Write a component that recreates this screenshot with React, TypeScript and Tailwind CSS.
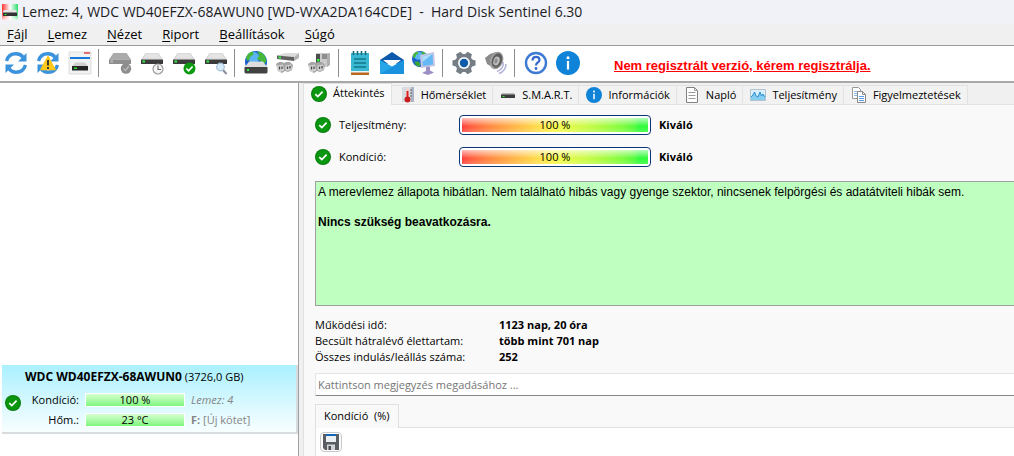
import { useState } from "react";
import type { ReactNode } from "react";

const MENU = ["Fájl", "Lemez", "Nézet", "Riport", "Beállítások", "Súgó"];

const STATS = [
  { label: "Működési idő:", value: "1123 nap, 20 óra" },
  { label: "Becsült hátralévő élettartam:", value: "több mint 701 nap" },
  { label: "Összes indulás/leállás száma:", value: "252" },
];

const TABS: { label: string; icon: ReactNode }[] = [
  { label: "Áttekintés", icon: <OkIcon /> },
  { label: "Hőmérséklet", icon: <ThermoIcon /> },
  { label: "S.M.A.R.T.", icon: <SmartIcon /> },
  { label: "Információk", icon: <InfoIcon className="w-4 h-4" /> },
  { label: "Napló", icon: <PageIcon /> },
  { label: "Teljesítmény", icon: <ChartIcon /> },
  { label: "Figyelmeztetések", icon: <PagesIcon /> },
];

const TOOLS: { label: string; icon: ReactNode }[][] = [
  [
    { label: "Frissítés", icon: <RefreshIcon /> },
    { label: "Hibák frissítése", icon: <RefreshIcon warn /> },
    { label: "Lemezablak", icon: <WindowIcon /> },
  ],
  [
    { label: "Teszt", icon: <DriveTool dim><circle cx="18" cy="17.5" r="5.2" fill="#8c8c8c" /><path d="M15.5 17.5l2 2 3.5-4.5" stroke="#b5b5b5" strokeWidth="1.6" fill="none" /></DriveTool> },
    { label: "Rövid teszt", icon: <DriveTool><circle cx="18" cy="18" r="5" fill="#f4f4f4" stroke="#9a9a9a" strokeWidth="1.2" /><path d="M18 14.5v4h3" stroke="#666" strokeWidth="1.1" fill="none" /></DriveTool> },
    { label: "Hosszú teszt", icon: <DriveTool><circle cx="17.5" cy="17.5" r="6" fill="#0a9a0f" /><path d="M14.3 17.5l2.3 2.3 4-4.3" stroke="#fff" strokeWidth="1.7" fill="none" /></DriveTool> },
    { label: "Felülettesztelés", icon: <DriveTool><path d="M19 19l3.5 4" stroke="#8a8d98" strokeWidth="2" /><circle cx="16.5" cy="16" r="3.8" fill="#d7ecfb" stroke="#a2bdd4" strokeWidth="1.2" /></DriveTool> },
  ],
  [
    { label: "Hálózati lemezek", icon: <GlobeDriveIcon /> },
    { label: "Eltávolítás", icon: <PlugIcon /> },
    { label: "Csatlakoztatás", icon: <PlugIcon upright /> },
  ],
  [
    { label: "Jelentés", icon: <NotepadIcon /> },
    { label: "Levél küldése", icon: <MailIcon /> },
    { label: "Hálózat", icon: <NetworkIcon /> },
  ],
  [
    { label: "Beállítások", icon: <GearIcon /> },
    { label: "Hangok", icon: <SpeakerIcon /> },
  ],
  [
    { label: "Súgó", icon: <HelpIcon /> },
    { label: "Névjegy", icon: <InfoIcon className="w-6 h-6" /> },
  ],
];

export default function App() {
  const [tab, setTab] = useState("Áttekintés");
  const [note, setNote] = useState("");

  return (
    <div className="min-h-screen flex flex-col overflow-hidden bg-[#f0f0f0] text-black text-[11px] font-['Open_Sans','Noto_Sans',sans-serif]">
      <header className="h-6 flex items-center gap-1 px-0.5 bg-[#f0f2f8]">
        <AppIcon />
        <h1 className="text-sm leading-6 whitespace-pre text-[#1c1c1c]">Lemez: 4, WDC WD40EFZX-68AWUN0 [WD-WXA2DA164CDE]  -  Hard Disk Sentinel 6.30</h1>
      </header>

      <nav className="h-[22px] flex items-start gap-5 pl-[7px] text-[13px] leading-5 border-b border-[#9a9a9a]">
        {MENU.map((m) => (
          <button key={m} type="button"><span className="underline underline-offset-2">{m[0]}</span>{m.slice(1)}</button>
        ))}
      </nav>

      <div className="h-[37px] flex items-start bg-white border-b-2 border-[#a8a8a8]">
        {TOOLS.map((group, i) => (
          <div key={i} className="flex items-center pt-px">
            {i > 0 && <span className="w-px h-7 ml-0.5 mr-[5px] bg-[#8c8c8c]" />}
            {group.map((t) => (
              <button key={t.label} type="button" aria-label={t.label} className="w-8 h-8 flex items-center justify-center">{t.icon}</button>
            ))}
          </div>
        ))}
        <a href="#register" className="ml-[30px] text-[13px] leading-10 font-bold text-[#ff0000] underline whitespace-nowrap font-['Liberation_Sans',Arial,sans-serif]">Nem regisztrált verzió, kérem regisztrálja.</a>
      </div>

      <div className="flex-1 flex">
        <aside className="w-[299px] shrink-0 flex flex-col justify-end pb-[22px] bg-white border-r border-[#a0a0a0]">
          <DiskCard />
        </aside>

        <main className="flex-1 min-w-0 ml-1 flex flex-col bg-[#f9f9f9] border-l border-[#e0e0e0]">
          <div role="tablist" className="h-[22px] flex items-end bg-[#f0f0f0]">
            {TABS.map((t) => (
              <button key={t.label} type="button" role="tab" aria-selected={tab === t.label} onClick={() => setTab(t.label)}
                className={`shrink-0 flex items-center gap-1.5 pl-[7px] pr-1.5 border-r border-t border-[#e2e2e2] whitespace-nowrap ${
                  tab === t.label ? "h-[22px] pb-0.5 bg-[#f9f9f9]" : "h-5 border-b bg-[#f2f2f2]"}`}>
                {t.icon}{t.label}
              </button>
            ))}
            <span className="flex-1 border-b border-[#e4e4e4]" />
          </div>

          <div className="flex-1 flex flex-col pl-[11px] pt-1">
            <Gauge label="Teljesítmény:" value={100} rating="Kiváló" />
            <Gauge label="Kondíció:" value={100} rating="Kiváló" />

            <div className="h-[125px] mt-2 px-0.5 pt-[3px] bg-[#bfffbf] border border-r-0 border-[#9f9f9f] text-xs leading-[15px] font-['Liberation_Sans',Arial,sans-serif]">
              <p className="mb-[15px]">A merevlemez állapota hibátlan. Nem található hibás vagy gyenge szektor, nincsenek felpörgési és adatátviteli hibák sem.</p>
              <p className="font-bold">Nincs szükség beavatkozásra.</p>
            </div>

            <dl className="mt-[11px] grid grid-cols-[184px_1fr] leading-4">
              {STATS.map((s) => (
                <div key={s.label} className="contents">
                  <dt>{s.label}</dt>
                  <dd className="font-bold">{s.value}</dd>
                </div>
              ))}
            </dl>

            <input type="text" aria-label="Megjegyzés" value={note} onChange={(e) => setNote(e.target.value)} placeholder="Kattintson megjegyzés megadásához ..."
              className="h-[23px] mt-2 px-0.5 bg-white border border-r-0 border-[#e5e5e5] border-b-[#868686] placeholder-[#767676] outline-none" />

            <div className="flex items-end mt-2">
              <button type="button" className="h-6 px-2 bg-[#f9f9f9] border border-b-0 border-[#e0e0e0] whitespace-pre">Kondíció  (%)</button>
              <span className="flex-1 border-b border-[#e0e0e0]" />
            </div>
            <div className="flex-1 pt-1 pl-1 bg-white border-l border-[#e0e0e0]">
              <button type="button" aria-label="Mentés" className="w-[22px] h-5 flex items-center justify-center bg-[#fdfdfd] border border-[#c8c8c8] rounded-sm">
                <SaveIcon />
              </button>
            </div>
          </div>
        </main>
      </div>
    </div>
  );
}

function DiskCard() {
  return (
    <div className="h-[69px] ml-0.5 pl-[3px] flex items-stretch gap-1 bg-linear-to-b from-[#a9f0ff] to-[#f8feff] border-r-2 border-b-2 border-[#d8dcde]">
      <div className="pt-[30px]"><OkIcon /></div>
      <div className="flex-1 whitespace-nowrap">
        <p className="pt-0.5 pb-[3px] leading-5"><b className="text-xs leading-5">WDC WD40EFZX-68AWUN0</b> (3726,0 GB)</p>
        <DiskRow label="Kondíció:" value="100 %"><i>Lemez: 4</i></DiskRow>
        <DiskRow label="Hőm.:" value="23 °C"><b>F:</b> [Új kötet]</DiskRow>
      </div>
    </div>
  );
}

function DiskRow({ label, value, children }: { label: string; value: string; children: ReactNode }) {
  return (
    <div className="h-5 flex items-center">
      <span className="w-[54px] text-right">{label}</span>
      <span className="w-[100px] h-3.5 ml-1.5 flex items-center justify-center bg-linear-to-b from-[#d6ffd0] to-[#7cf67c] border border-white">{value}</span>
      <span className="ml-1.5 text-[#858585]">{children}</span>
    </div>
  );
}

function Gauge({ label, value, rating }: { label: string; value: number; rating: string }) {
  return (
    <div className="h-8 flex items-center">
      <OkIcon />
      <span className="w-[120px] ml-2">{label}</span>
      <div className="relative w-48 h-5 p-0.5 bg-white border border-[#0b3475] rounded-[4px]">
        <div className="h-full bg-linear-to-r from-[#ff2424] via-[#f8f838] via-50% to-[#18fa22] to-95%" style={{ width: `${value}%` }}>
          <div className="h-full bg-linear-to-b from-white/70 via-white/10 via-60% to-white/25" />
        </div>
        <span className="absolute inset-0 flex items-center justify-center">{value} %</span>
      </div>
      <b className="ml-2">{rating}</b>
    </div>
  );
}

function OkIcon() {
  return (
    <svg className="w-4 h-4 shrink-0" viewBox="0 0 16 16">
      <circle cx="8" cy="8" r="8" fill="#087c0c" />
      <circle cx="8" cy="8" r="7" fill="#0a960f" />
      <path d="M4.3 8.2l2.5 2.4 4.8-4.9" fill="none" stroke="#fff" strokeWidth="1.7" />
    </svg>
  );
}

function InfoIcon({ className }: { className: string }) {
  return (
    <svg className={`${className} shrink-0`} viewBox="0 0 24 24">
      <circle cx="12" cy="12" r="12" fill="#0f83d8" />
      <circle cx="12" cy="6.8" r="1.5" fill="#fff" />
      <path d="M12 10v8.5" stroke="#fff" strokeWidth="2.2" />
    </svg>
  );
}

function AppIcon() {
  return (
    <svg className="w-4 h-4 shrink-0" viewBox="0 0 16 16">
      <defs>
        <linearGradient id="app" x1="0" y1="0" x2="1" y2="0">
          <stop offset="0" stopColor="#f33" /><stop offset=".5" stopColor="#fff" /><stop offset="1" stopColor="#2fdc6c" />
        </linearGradient>
        <linearGradient id="fade" x1="0" y1="0" x2="0" y2="1">
          <stop offset=".6" stopColor="#fff" stopOpacity="0" /><stop offset="1" stopColor="#fff" stopOpacity=".8" />
        </linearGradient>
      </defs>
      <path d="M0 0h16v16H0z" fill="url(#app)" />
      <path d="M0 0h16v16H0z" fill="url(#fade)" />
      <path d="M2 6h12l1.5 3H.5z" fill="#e4e4e4" />
      <path d="M1 8.5h14V12H1z" fill="#333" />
      <path d="M2.5 10h2v1h-2z" fill="#3f3" />
    </svg>
  );
}

function DriveBody({ dim }: { dim?: boolean }) {
  return (
    <g>
      <path d="M5.5 2h13L23 8.5H1z" fill={dim ? "#a6a6a6" : "#d5d5d5"} />
      <path d="M6.5 2.5h11l3.5 5H3z" fill={dim ? "#ababab" : "#e4e4e4"} />
      <path d="M1 8.5h22V13H1z" fill={dim ? "#8e8e8e" : "#3b3b3b"} />
      <path d="M2.5 9.5H5v2H2.5z" fill={dim ? "#bbb" : "#30f040"} />
    </g>
  );
}

function DriveTool({ dim, children }: { dim?: boolean; children: ReactNode }) {
  return <svg className="w-6 h-6" viewBox="0 0 24 24"><DriveBody dim={dim} />{children}</svg>;
}

function RefreshIcon({ warn }: { warn?: boolean }) {
  return (
    <svg className="w-6 h-6" viewBox="0 0 24 24">
      <path d="M2.5 10C4 4.5 8 2.8 12 2.8c3 0 5.5 1.2 7 3.4" fill="none" stroke="#3c93dc" strokeWidth="3.4" />
      <path d="M22.5 2v8.5H14z" fill="#3c93dc" />
      <path d="M21.5 14c-1.5 5.5-5.5 7.2-9.5 7.2-3 0-5.5-1.2-7-3.4" fill="none" stroke="#3c93dc" strokeWidth="3.4" />
      <path d="M1.5 22v-8.5H10z" fill="#3c93dc" />
      {warn && (
        <g>
          <path d="M12 5.5l7 13H5z" fill="#ffc91c" stroke="#ffc91c" strokeWidth="1.5" strokeLinejoin="round" />
          <path d="M12 9v5.5M12 16v2" stroke="#2b2b2b" strokeWidth="1.8" />
        </g>
      )}
    </svg>
  );
}

function WindowIcon() {
  return (
    <svg className="w-6 h-6" viewBox="0 0 24 24">
      <path d="M1 1h22v22H1z" fill="#f0f2f3" stroke="#ddd" />
      <path d="M16 2h6" stroke="#d44" strokeWidth="1.5" />
      <path d="M2 7h20" stroke="#1979d8" strokeWidth="2" />
      <path d="M7 11.5h10l3 4H4z" fill="#d1d1d1" />
      <path d="M4 15h16v4.5H4z" fill="#252525" />
      <path d="M6 16.5h3V18H6z" fill="#2be23b" />
    </svg>
  );
}

function Globe({ cx, cy, r }: { cx: number; cy: number; r: number }) {
  return (
    <g transform={`translate(${cx} ${cy}) scale(${r / 10})`}>
      <circle r="10" fill="#1a5fd0" />
      <circle cx="-2" cy="-4" r="5" fill="#5cb4f2" />
      <path d="M-9-4c1-3 3-5 6-5.5l1 2.5-3 2-1 3-2 1zM1-9.500c5 0 8 4 8.500 8.500L7 3 4-1 1-3l2-3z" fill="#45b83c" />
      <path d="M-7 3l5 0 3 3-2 4-4-2z" fill="#3aa636" />
    </g>
  );
}

function GlobeDriveIcon() {
  return (
    <svg className="w-6 h-6" viewBox="0 0 24 24">
      <Globe cx={12} cy={11} r={11} />
      <path d="M5 10.500h14l4.500 6H.5z" fill="#dedede" />
      <path d="M.5 16h23v5.500l-1 1h-21l-1-1z" fill="#424242" />
      <path d="M3 18h2v2H3z" fill="#30f040" />
    </svg>
  );
}

function PlugIcon({ upright }: { upright?: boolean }) {
  return (
    <svg className="w-6 h-6" viewBox="0 0 24 24">
      {upright ? (
        <g>
          <path d="M8 2h14v12l-4 2H8z" fill="#cbcbcb" />
          <path d="M19 3l3-1v12l-3 2z" fill="#b0b0b0" />
          <path d="M8 3h4v11H8z" fill="#4d4d4d" />
          <path d="M14 3h5v5h-5z" fill="#8e8e8e" />
          <path d="M9 8h2.500v2.500H9z" fill="#30f040" />
        </g>
      ) : (
        <g>
          <path d="M1 4.500L9 2h14l-5 4z" fill="#dcdcdc" />
          <path d="M1 4.500L18 6v4L1 8z" fill="#5f5f5f" />
          <path d="M18 6l5-4v5l-5 3z" fill="#b2b2b2" />
          <path d="M2.500 5.500H5v2H2.500z" fill="#30f040" />
        </g>
      )}
      <path d="M0 13l3-2h3l2 1 2-1h4l3 3-1 5-4 2-3-1-3 2-4-2z" fill="#a4a4a4" />
      <path d="M1 14.500l6-1 1 6-4 1.500-3-2zM9.500 14.500l5.500-1 1 4.500-4 2-2.500-1z" fill="#d2d2d2" />
      <path d="M3.500 15.500v3M6 15.500v2.500M11.500 15.500v2.500M14 15v2.500" stroke="#4b4b4b" strokeWidth="1.300" />
    </svg>
  );
}

function NotepadIcon() {
  return (
    <svg className="w-6 h-6" viewBox="0 0 24 24">
      <path d="M3 2h18v19H3z" fill="#39b8d2" />
      <path d="M3 21h18v3H3z" fill="#b86620" />
      <path d="M3 20h18v1.500H3z" fill="#eef4f4" />
      <path d="M5.500 0v4M9.500 0v4M13.500 0v4M17.500 0v4" stroke="#16667c" strokeWidth="1.600" />
      <path d="M6 8h12M6 12h12M6 16h12" stroke="#13758c" strokeWidth="1.500" />
    </svg>
  );
}

function MailIcon() {
  return (
    <svg className="w-6 h-6" viewBox="0 0 24 24">
      <path d="M0 9L12 1l12 8v4H0z" fill="#0d59ab" />
      <path d="M3 9h18l-9 7z" fill="#fff" />
      <path d="M0 9l12 6.500L24 9v14H0z" fill="#27a5e9" />
      <path d="M0 23l24-14v14z" fill="#1b92de" />
    </svg>
  );
}

function NetworkIcon() {
  return (
    <svg className="w-6 h-6" viewBox="0 0 24 24">
      <Globe cx={8} cy={8} r={8} />
      <path d="M8 4l14-3 1 14-14 2z" fill="#c4c4e4" />
      <path d="M10 5.500l10.500-2.500.5 10.500-10 1.500z" fill="#65b8f3" />
      <path d="M10 5.500l10.500-2.500-10 8z" fill="#aeddfb" />
      <path d="M14 16l4-.5v4l4 2-6 2.500-6-2 4-2z" fill="#9c8fc4" />
    </svg>
  );
}

function GearIcon() {
  return (
    <svg className="w-6 h-6" viewBox="0 0 24 24">
      <g fill="#757d85">
        <circle cx="12" cy="12" r="9" />
        {[30, 90, 150].map((a) => (
          <path key={a} d="M8.500 4l1-3.500h5l1 3.500v16l-1 3.500h-5l-1-3.500z" transform={`rotate(${a} 12 12)`} />
        ))}
      </g>
      <circle cx="12" cy="12" r="6" fill="#f6f8fa" />
      <circle cx="12" cy="12" r="4.200" fill="#0d5baa" />
    </svg>
  );
}

function SpeakerIcon() {
  return (
    <svg className="w-6 h-6" viewBox="0 0 24 24">
      <path d="M19 11c1 5-2 8-6 9.500M22 13c0 5-3 8-7 9.500" fill="none" stroke="#b4b4dc" strokeWidth="1.600" />
      <path d="M1 7l5-4 6-2 5 2-4 15-5-2-5-3z" fill="#8a8a8a" />
      <ellipse cx="12.500" cy="9.500" rx="6.500" ry="9" transform="rotate(20 12.500 9.500)" fill="#a0a0a0" />
      <ellipse cx="13" cy="9.500" rx="5" ry="7.500" transform="rotate(20 13 9.500)" fill="#5f5f5f" />
      <ellipse cx="12.500" cy="10" rx="3" ry="4.500" transform="rotate(20 12.500 10)" fill="#bcbcbc" />
      <ellipse cx="12" cy="10" rx="1.500" ry="2.500" transform="rotate(20 12 10)" fill="#8c8c8c" />
    </svg>
  );
}

function HelpIcon() {
  return (
    <svg className="w-6 h-6" viewBox="0 0 24 24">
      <circle cx="12" cy="12" r="10" fill="#fff" stroke="#3c7ad4" strokeWidth="2.400" />
      <path d="M8.500 9.500c0-5 7-4.500 7-.5 0 2.500-3.500 2.500-3.500 5.500" fill="none" stroke="#3568cc" strokeWidth="2.200" />
      <circle cx="12" cy="17.500" r="1.400" fill="#3568cc" />
    </svg>
  );
}

function ThermoIcon() {
  return (
    <svg className="w-4 h-4 shrink-0" viewBox="0 0 16 16">
      <path d="M3 0h12v15H3z" fill="#d5dbe3" />
      <path d="M12 0h3v15h-3z" fill="#aab4c4" />
      <path d="M7 1h3v11H7z" fill="#f5d4d0" />
      <path d="M8.500 4v8" stroke="#d22" strokeWidth="2" />
      <circle cx="8.500" cy="12.500" r="3" fill="#c81e1e" />
      <path d="M11 3h2M11 6h2M11 9h2" stroke="#666" />
    </svg>
  );
}

function SmartIcon() {
  return (
    <svg className="w-4 h-4 shrink-0" viewBox="0 0 16 16">
      <path d="M2 6h12l1 2H1z" fill="#bcbcbc" />
      <path d="M1 7.500h14V11H1z" fill="#3c3c3c" />
      <path d="M2.500 9h2v1h-2z" fill="#3e4" />
    </svg>
  );
}

function PageIcon() {
  return (
    <svg className="w-4 h-4 shrink-0" viewBox="0 0 16 16">
      <path d="M2.500.5h8l3 3v12h-11z" fill="#fff" stroke="#818181" />
      <path d="M10.500.5v3h3M4.500 5.500h7M4.500 8.500h7M4.500 11.500h7" fill="none" stroke="#999" />
    </svg>
  );
}

function PagesIcon() {
  return (
    <svg className="w-4 h-4 shrink-0" viewBox="0 0 16 16">
      <path d="M1.500.5h6l2 2v9h-8z" fill="#fff" stroke="#999" />
      <path d="M3 4.500h5M3 6.500h3M3 8.500h3" stroke="#8fb8ea" />
      <path d="M6.500 4.500h5l3 3v8h-8z" fill="#fff" stroke="#888" />
      <path d="M11.500 4.500v3h3" fill="none" stroke="#888" />
      <path d="M8 9.500h5M8 11.500h5M8 13.500h5" stroke="#5b9be6" />
    </svg>
  );
}

function ChartIcon() {
  return (
    <svg className="w-4 h-4 shrink-0" viewBox="0 0 16 16">
      <path d="M.5 2.500h15v11H.5z" fill="#d9effb" stroke="#b3c4cf" />
      <path d="M1 10l2-2 1.500-3L6 9l2 1 2-5 1.500 4L13 7l2 3v3H1z" fill="#86cdf2" />
      <path d="M1 10l2-2 1.500-3L6 9l2 1 2-5 1.500 4L13 7l2 3" fill="none" stroke="#278ecf" />
    </svg>
  );
}

function SaveIcon() {
  return (
    <svg className="w-4 h-4" viewBox="0 0 16 16">
      <path d="M0 0h16v16H2l-2-2z" fill="#5a5d62" />
      <path d="M3 0h10v8H3z" fill="#eceff1" />
      <path d="M3 0h10v2H3z" fill="#1467b8" />
      <path d="M4 10.500h8V16H4z" fill="#d2d4d6" />
      <path d="M5.500 12H8v4H5.500z" fill="#4a4d52" />
    </svg>
  );
}
